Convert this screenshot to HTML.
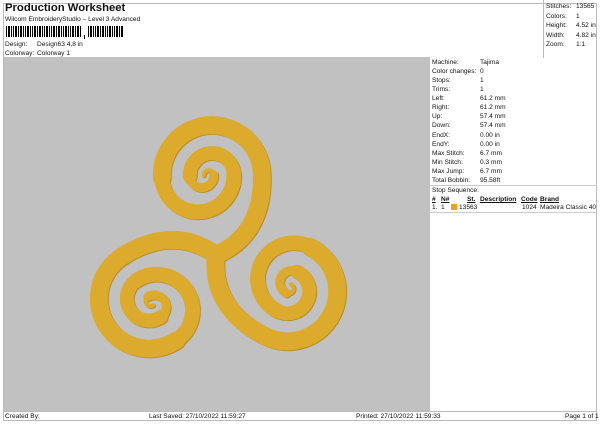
<!DOCTYPE html>
<html><head><style>
*{margin:0;padding:0;box-sizing:border-box}
body{width:600px;height:424px;background:#fff;font-family:"Liberation Sans",sans-serif;font-size:6.6px;color:#111;position:relative;overflow:hidden}
.a{position:absolute;white-space:nowrap;line-height:9px}
</style></head><body>
<div class="a" style="left:3px;top:3px;width:594px;height:418px;border:1px solid #bbb"></div>
<div class="a" style="left:5px;top:1px;font-size:11.3px;font-weight:bold;line-height:15px">Production Worksheet</div>
<div class="a" style="left:5px;top:15px">Wilcom EmbroideryStudio – Level 3 Advanced</div>
<svg class="a" style="left:6px;top:26px" width="120" height="14">
<g fill="#000">
<rect x="0" y="0" width="1" height="11"/><rect x="2" y="0" width="2" height="11"/><rect x="5" y="0" width="1" height="11"/><rect x="7" y="0" width="1" height="11"/><rect x="9" y="0" width="2" height="11"/><rect x="12" y="0" width="1" height="11"/><rect x="14" y="0" width="2" height="11"/><rect x="17" y="0" width="1" height="11"/><rect x="19" y="0" width="1" height="11"/><rect x="21" y="0" width="2" height="11"/><rect x="24" y="0" width="1" height="11"/><rect x="26" y="0" width="1" height="11"/><rect x="28" y="0" width="2" height="11"/><rect x="31" y="0" width="1" height="11"/><rect x="33" y="0" width="2" height="11"/><rect x="36" y="0" width="1" height="11"/><rect x="38" y="0" width="1" height="11"/><rect x="40" y="0" width="2" height="11"/><rect x="43" y="0" width="1" height="11"/><rect x="45" y="0" width="1" height="11"/><rect x="47" y="0" width="2" height="11"/><rect x="50" y="0" width="1" height="11"/><rect x="52" y="0" width="2" height="11"/><rect x="55" y="0" width="1" height="11"/><rect x="57" y="0" width="1" height="11"/><rect x="59" y="0" width="2" height="11"/><rect x="62" y="0" width="1" height="11"/><rect x="64" y="0" width="1" height="11"/><rect x="66" y="0" width="2" height="11"/><rect x="69" y="0" width="1" height="11"/><rect x="71" y="0" width="2" height="11"/><rect x="74" y="0" width="1" height="11"/>
<rect x="78" y="9" width="1" height="4"/>
<rect x="82" y="0" width="1" height="11"/><rect x="84" y="0" width="2" height="11"/><rect x="87" y="0" width="1" height="11"/><rect x="89" y="0" width="1" height="11"/><rect x="91" y="0" width="2" height="11"/><rect x="94" y="0" width="1" height="11"/><rect x="96" y="0" width="2" height="11"/><rect x="99" y="0" width="1" height="11"/><rect x="101" y="0" width="1" height="11"/><rect x="103" y="0" width="2" height="11"/><rect x="106" y="0" width="1" height="11"/><rect x="108" y="0" width="1" height="11"/><rect x="110" y="0" width="2" height="11"/><rect x="113" y="0" width="1" height="11"/><rect x="115" y="0" width="2" height="11"/>
</g></svg>
<div class="a" style="left:5px;top:40px">Design:</div><div class="a" style="left:37px;top:40px">Design63 4,8 in</div>
<div class="a" style="left:5px;top:49px">Colorway:</div><div class="a" style="left:37px;top:49px">Colorway 1</div>
<div class="a" style="left:543px;top:0;width:54px;height:58px;border-left:1px solid #bbb"></div>
<div class="a" style="left:546px;top:2px;line-height:9.6px">Stitches:<br>Colors:<br>Height:<br>Width:<br>Zoom:</div>
<div class="a" style="left:576px;top:2px;line-height:9.6px">13565<br>1<br>4.52 in<br>4.82 in<br>1:1</div>
<div class="a" style="left:4px;top:57px;width:426px;height:354px;background:#c1c1c1"></div>
<svg class="a" style="left:4px;top:57px" width="426" height="354">
<defs>
<g id="arm" fill="none" stroke-linecap="round">
<path d="M0,0 C40,-15 50,-50 50,-80 A50,50 0 0 0 -50,-80" stroke-width="18"/>
<path d="M-50,-80 A36,36 0 0 0 22,-80" stroke-width="15"/>
<path d="M22,-80 A22,22 0 0 0 -22,-80" stroke-width="14"/>
<path d="M-22,-80 A12,12 0 0 0 2,-80" stroke-width="9"/>
<path d="M2,-80 A5,5 0 0 0 -8,-80" stroke-width="4"/>
</g>
<g id="tri"><use href="#arm"/><use href="#arm" transform="rotate(120)"/><use href="#arm" transform="rotate(240)"/></g>
</defs>
<g transform="translate(212,198) rotate(-3)">
<g stroke="#b98a1c" transform="translate(0.8,0.8)"><use href="#tri"/></g>
<g stroke="#dcaa2c"><use href="#tri"/></g>
</g>
</svg>
<div class="a" style="left:432px;top:58px;line-height:9.07px">Machine:<br>Color changes:<br>Stops:<br>Trims:<br>Left:<br>Right:<br>Up:<br>Down:<br>EndX:<br>EndY:<br>Max Stitch:<br>Min Stitch:<br>Max Jump:<br>Total Bobbin:</div>
<div class="a" style="left:480px;top:58px;line-height:9.07px">Tajima<br>0<br>1<br>1<br>61.2 mm<br>61.2 mm<br>57.4 mm<br>57.4 mm<br>0.00 in<br>0.00 in<br>6.7 mm<br>0.3 mm<br>6.7 mm<br>95.58ft</div>
<div class="a" style="left:430px;top:185px;width:167px;border-top:1px solid #ccc"></div>
<div class="a" style="left:432px;top:186px">Stop Sequence:</div>
<div class="a" style="left:432px;top:195px;font-weight:bold;text-decoration:underline">#</div>
<div class="a" style="left:441px;top:195px;font-weight:bold;text-decoration:underline">N#</div>
<div class="a" style="left:467px;top:195px;font-weight:bold;text-decoration:underline">St.</div>
<div class="a" style="left:480px;top:195px;font-weight:bold;text-decoration:underline">Description</div>
<div class="a" style="left:521px;top:195px;font-weight:bold;text-decoration:underline">Code</div>
<div class="a" style="left:540px;top:195px;font-weight:bold;text-decoration:underline">Brand</div>
<div class="a" style="left:432px;top:203px">1.</div><div class="a" style="left:441px;top:203px">1</div>
<div class="a" style="left:451px;top:204px;width:6px;height:6px;background:#f0a020"></div>
<div class="a" style="left:459px;top:203px">13563</div>
<div class="a" style="left:522px;top:203px">1024</div><div class="a" style="left:540px;top:203px">Madeira Classic 40</div>
<div class="a" style="left:430px;top:212px;width:167px;border-top:1px solid #ccc"></div>
<div class="a" style="left:3px;top:411px;width:594px;border-top:1px solid #bbb"></div>
<div class="a" style="left:5px;top:412px">Created By:</div>
<div class="a" style="left:149px;top:412px">Last Saved: 27/10/2022 11:59:27</div>
<div class="a" style="left:356px;top:412px">Printed: 27/10/2022 11:59:33</div>
<div class="a" style="left:565px;top:412px">Page 1 of 1</div>
</body></html>
